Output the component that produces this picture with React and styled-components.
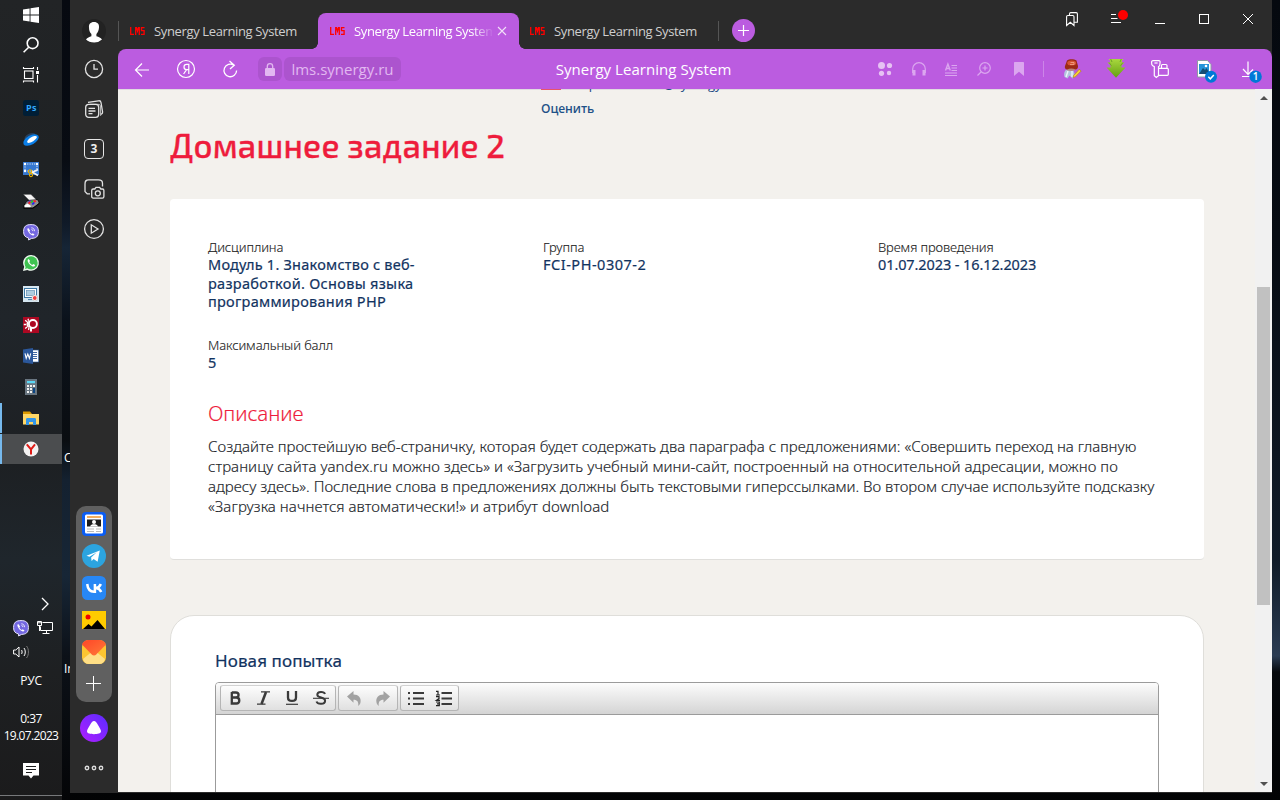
import React from "react";
import styled, { createGlobalStyle } from "styled-components";

const Global = createGlobalStyle`
  * { box-sizing: border-box; }
  html, body { margin: 0; padding: 0; height: 800px; overflow: hidden; background: #05080c; }
  body { font-family: "Noto Sans", "Open Sans", sans-serif; }
  svg { display: block; flex: none; overflow: visible; }
`;

const ui = `"Open Sans", "Noto Sans", sans-serif`;

const Desktop = styled.div`
  display: flex;
  width: 1280px;
  height: 800px;
  overflow: hidden;
  background: linear-gradient(180deg, #05090f 0%, #070c13 30%, #101b28 70%, #2a3b52 82%, #06090d 84%, #020304 100%);
`;

/* ---------- system task bar ---------- */

const Taskbar = styled.div`
  display: flex;
  flex-direction: column;
  align-items: stretch;
  width: 62px;
  height: 800px;
  background: linear-gradient(180deg, #222426 0%, #1f2224 20%, #20252a 40%, #1d2023 58%, #1f262c 70%, #1e2022 84%, #1b1b1c 100%);
`;

const SystemButtons = styled.div`
  display: flex;
  flex-direction: column;
  height: 93px;
`;

const TaskSlot = styled.div`
  display: flex;
  align-items: center;
  justify-content: center;
  height: 30px;
  margin-bottom: ${(p) => (p.$gap ? "1px" : "0")};
  background: ${(p) => (p.$active ? "#4b4d4f" : "transparent")};
  border-left: 2px solid ${(p) => (p.$running ? "#76b9ed" : "transparent")};
  border-right: 2px solid transparent;
  background-clip: border-box;
`;

const Tray = styled.div`
  display: flex;
  flex-wrap: wrap;
  margin-top: auto;
  padding: 0 5px 0 9px;
  height: 72px;
`;

const TrayCell = styled.div`
  display: flex;
  align-items: center;
  justify-content: center;
  width: 24px;
  height: 24px;
`;

const TrayText = styled.div`
  height: ${(p) => p.$h}px;
  margin-top: ${(p) => p.$top || 0}px;
  font: 400 12px/${(p) => p.$h}px ${ui};
  letter-spacing: ${(p) => p.$ls || 0}px;
  text-align: center;
  white-space: nowrap;
  color: #fff;
`;

const NoticeCell = styled.div`
  display: flex;
  justify-content: center;
  align-items: flex-start;
  height: 32px;
  margin-top: 19px;
`;

const TaskbarEnd = styled.div`
  height: 5px;
  border-top: 1px solid #77797b;
`;

const WallpaperStrip = styled.div`
  position: relative;
  width: 8px;
  height: 800px;
  overflow: hidden;
  background: linear-gradient(180deg, #060910 0, #080c13 20%, #101a28 28%, #162536 31%, #0b121b 40%, #0a0d11 55%, #142130 60%, #172636 72%, #0c1118 82%, #040507 100%);
`;

const DesktopLabel = styled.span`
  position: absolute;
  left: ${(p) => p.$x}px;
  top: ${(p) => p.$y}px;
  font: 12px/14px ${ui};
  color: #fff;
`;

/* ---------- browser window ---------- */

const Browser = styled.div`
  display: flex;
  width: 1202px;
  height: 793px;
  padding-bottom: 1px;
  background: #2b2b2b;
`;

const Sidebar = styled.div`
  display: flex;
  flex-direction: column;
  align-items: center;
  width: 48px;
  height: 792px;
  padding-top: 19px;
`;

const SideSlot = styled.div`
  display: flex;
  align-items: center;
  justify-content: center;
  width: 48px;
  height: ${(p) => p.$h}px;
`;

const AppPanel = styled.div`
  display: flex;
  flex-direction: column;
  align-items: center;
  gap: 8px;
  width: 36px;
  height: 196px;
  margin-top: auto;
  padding-top: 6px;
  border-radius: 10px;
  background: #606060;
`;

const NumberBadge = styled.div`
  width: 20px;
  height: 20px;
  border: 1.4px solid #e6e6e6;
  border-radius: 4px;
  font: 700 12px/18px ${ui};
  text-align: center;
  color: #eee;
`;

const Main = styled.div`
  display: flex;
  flex-direction: column;
  width: 1154px;
  height: 792px;
`;

const TabStrip = styled.div`
  display: flex;
  align-items: flex-end;
  height: 49px;
`;

const Tab = styled.div`
  position: relative;
  display: flex;
  align-items: center;
  width: ${(p) => p.$w}px;
  height: 36px;
  padding-left: ${(p) => p.$pad}px;
  border-radius: 8px 8px 0 0;
  background: ${(p) => (p.$active ? "#bb5ce0" : "transparent")};
  color: ${(p) => (p.$active ? "#fff" : "#cfcfcf")};
  ${(p) =>
    p.$active &&
    `&::before, &::after { content: ""; position: absolute; bottom: 0; width: 6px; height: 6px; }
     &::before { left: -6px; background: radial-gradient(circle at 0 0, transparent 5.5px, #bb5ce0 6px); }
     &::after { right: -6px; background: radial-gradient(circle at 100% 0, transparent 5.5px, #bb5ce0 6px); }`}
`;

const TabTitle = styled.span`
  width: ${(p) => (p.$fade ? "138px" : "auto")};
  margin-left: 9px;
  overflow: hidden;
  white-space: nowrap;
  font: 400 13px/20px ${ui};
  letter-spacing: -0.36px;
  ${(p) => p.$fade && "mask-image: linear-gradient(90deg, #000 118px, transparent 140px);"}
`;

const StripDivider = styled.span`
  align-self: flex-end;
  width: 1px;
  height: 20px;
  margin-bottom: 8px;
  background: #555;
`;

const NewTab = styled.div`
  display: flex;
  align-items: center;
  justify-content: center;
  width: 23px;
  height: 23px;
  margin: 0 0 7px 13px;
  border-radius: 50%;
  background: #bb5ce0;
`;

const WindowButtons = styled.div`
  display: flex;
  align-self: flex-start;
  margin: 4px 2px 0 auto;
`;

const Slot = styled.div`
  display: flex;
  align-items: center;
  justify-content: center;
  flex: none;
  width: ${(p) => p.$w || 44}px;
  height: 30px;
`;

const AddressBar = styled.div`
  display: flex;
  align-items: center;
  height: 40px;
  padding-left: 4px;
  border-radius: 8px 8px 0 0;
  background: #bb5ce0;
`;

const Pill = styled.div`
  display: flex;
  align-items: center;
  justify-content: center;
  width: ${(p) => p.$w}px;
  height: 24px;
  margin-left: ${(p) => p.$ml}px;
  border-radius: 6px;
  background: #ac54ce;
  font: 400 15px/24px ${ui};
  color: #e2b8f1;
`;

const PageTitle = styled.div`
  flex: 1;
  padding-left: 18px;
  text-align: center;
  font: 400 15px/24px ${ui};
  letter-spacing: 0.05px;
  color: #fff;
`;

const BarDivider = styled.span`
  width: 1px;
  height: 16px;
  background: #cc85e8;
`;

const Viewport = styled.div`
  display: flex;
  height: 703px;
  overflow: hidden;
  background: #f3f1ed;
  box-shadow: inset 0 1px 0 #e0dbe0;
`;

const Page = styled.div`
  display: flex;
  flex-direction: column;
  width: 1137px;
  height: 703px;
  padding: 0 51px 0 52px;
  overflow: hidden;
`;

const Scrollbar = styled.div`
  display: flex;
  flex-direction: column;
  align-items: center;
  width: 17px;
  padding: 7px 0 6px;
  background: #f1f1f1;
`;

const Thumb = styled.div`
  width: 13px;
  height: 318px;
  margin: 187px 0 auto;
  background: #c1c1c1;
`;

const CutLine = styled.div`
  display: flex;
  flex: none;
  align-items: flex-end;
  height: 3px;
  margin-left: 371px;
  overflow: hidden;
  font: 400 13px/16px ${ui};
  color: #1b4a82;
  white-space: nowrap;
`;

const RedMark = styled.span`
  width: 20px;
  height: 1px;
  margin: 0 5px 2px 0;
  background: #e8546a;
`;

const CutWord = styled.span`
  width: ${(p) => p.$w}px;
`;

const RateLink = styled.a`
  flex: none;
  margin: 8px 0 0 371px;
  font: 600 12px/18px ${ui};
  letter-spacing: -0.05px;
  color: #1f5288;
`;

const Heading = styled.h1`
  flex: none;
  height: 50px;
  margin: 2px 0 29px;
  font: 550 33px/50px "Exo 2", "Noto Sans", sans-serif;
  letter-spacing: 0.27px;
  white-space: nowrap;
  color: #ee1c3c;
  -webkit-text-stroke: 0.4px #ee1c3c;
`;

const InfoCard = styled.section`
  height: 361px;
  flex: none;
  padding: 39px 38px 0;
  border-radius: 4px;
  border-bottom: 1px solid #e0dfdc;
  background: #fff;
`;

const Fields = styled.div`
  display: grid;
  grid-template-columns: repeat(3, 335px);
  grid-template-rows: 98px 61px;
`;

const Field = styled.div`
  padding-right: 90px;
`;

const FieldLabel = styled.div`
  font-size: 13px;
  font-weight: 350;
  line-height: 19px;
  letter-spacing: -0.1px;
  color: #222;
  -webkit-text-stroke: 0.12px #222;
`;

const FieldValue = styled.div`
  font-size: 14.5px;
  font-weight: 400;
  line-height: 18.5px;
  margin-top: -2px;
  white-space: nowrap;
  color: #12335f;
  -webkit-text-stroke: 0.2px #12335f;
`;

const SubHeading = styled.h2`
  margin: 0 0 8px;
  padding-top: 1px;
  font-size: 20.5px;
  font-weight: 300;
  line-height: 30px;
  letter-spacing: -0.1px;
  color: #ee1c3c;
  -webkit-text-stroke: 0.15px #ee1c3c;
`;

const Description = styled.p`
  margin: 0;
  font-size: 15px;
  line-height: 20px;
  font-weight: 350;
  color: #212429;
  white-space: nowrap;
  -webkit-text-stroke: 0.15px #212429;
`;

const TextLine = styled.span`
  display: block;
  letter-spacing: ${(p) => p.$ls || 0}px;
`;

const AttemptCard = styled.section`
  flex: none;
  height: 220px;
  margin-top: 55px;
  padding: 33px 44px 0;
  border: 1px solid #dfdeda;
  border-radius: 24px 24px 0 0;
  background: #fff;
`;

const AttemptTitle = styled.div`
  height: 33px;
  font-size: 17px;
  font-weight: 400;
  line-height: 24px;
  letter-spacing: 0.1px;
  color: #12335f;
  -webkit-text-stroke: 0.2px #12335f;
`;

const Editor = styled.div`
  height: 180px;
  border: 1px solid #9b9b9b;
  border-radius: 4px 4px 0 0;
`;

const EditorBar = styled.div`
  display: flex;
  gap: 2px;
  height: 32px;
  padding: 2px 4px;
  border-bottom: 1px solid #9b9b9b;
  border-radius: 3px 3px 0 0;
  background: linear-gradient(#fcfcfc, #d4d4d4);
`;

const ToolGroup = styled.div`
  display: flex;
  width: ${(p) => p.$w}px;
  height: 26px;
  padding-left: ${(p) => p.$inset || 0}px;
  border: 1px solid #b5b5b5;
  border-top-color: #d2d2d2;
  border-radius: 3px;
  background: linear-gradient(#fdfdfd, #e0e0e0);
`;

const Tool = styled.div`
  display: flex;
  align-items: center;
  justify-content: center;
  width: 28.5px;
  height: 24px;
`;

const S = ({ w = 16, h, children, vb, ...rest }) => (
  <svg width={w} height={h || w} viewBox={vb || `0 0 ${w} ${h || w}`} fill="none" {...rest}>
    {children}
  </svg>
);

/* ---------- task bar icons ---------- */

const Windows = () => (
  <S fill="#fff"><path d="M0 2.4 6.6 1.5v6H0zM7.5 1.3 16 0v7.5H7.5zM0 8.5h6.6v6L0 13.6zM7.5 8.5H16V16l-8.5-1.3z" /></S>
);
const Search = () => (
  <S stroke="#fff" strokeWidth="1.6"><circle cx="9.6" cy="6.2" r="5.4" /><path d="M5.7 10.2.6 15.3" /></S>
);
const TaskView = () => (
  <S stroke="#fff" strokeWidth="1.1"><rect x="1.5" y="4" width="8.500" height="7.500" /><path d="M.5 0v1.500h10V0M.5 15.500v-1.500h10v1.500M14.500 0v3M14.500 8v7.500" /><path d="M13 5.500h3" strokeWidth="3" /></S>
);
const Photoshop = () => (
  <S><rect width="16" height="16" rx="2.5" fill="#001e36" /><text x="3" y="11.4" fontFamily="Open Sans" fontWeight="700" fontSize="9" fill="#31a8ff" textLength="10.4">Ps</text></S>
);
const Disk = () => (
  <S><ellipse cx="7" cy="6" rx="6" ry="3.4" transform="rotate(-28 7 6)" fill="#27405e" /><ellipse cx="8" cy="9" rx="8.6" ry="4.6" transform="rotate(-30 8 9)" fill="#0b7fe8" /><ellipse cx="9" cy="8.4" rx="5.6" ry="2.2" transform="rotate(-32 9 8.4)" fill="#fff" /></S>
);
const Snip = () => (
  <S><rect width="16" height="13" fill="#3678d0" /><rect x="2" y="2" width="12" height="7" stroke="#fff" strokeDasharray="1 1.3" /><g fill="#fff"><circle cx="2" cy="2" r="1.200" /><circle cx="14" cy="2" r="1.200" /><circle cx="2" cy="9" r="1.200" /></g><path d="M15 7.500 8 11M15 13.500 8 9.500" stroke="#f3f3f3" strokeWidth="1.7" /><circle cx="7" cy="9.400" r="1.6" stroke="#e8b000" strokeWidth="1.1" /><circle cx="8" cy="13" r="1.6" stroke="#e8b000" strokeWidth="1.1" /></S>
);
const Scanner = () => (
  <S><path d="M3.500 8.500 6 7l8.500-.5L16 9v2l-6 4.500H1L.5 13z" fill="#8f8f8f" stroke="#000" strokeWidth=".8" /><path d="M.5 1.500H8L13 6.500 6 7z" fill="#f4f4f4" stroke="#555" strokeWidth=".3" /><path d="m4.500 9.500 2-2h2L6 9.500z" fill="#2a2af0" /><path d="m5 9.800 2-1.800 1 1.500-2 2z" fill="#f22" /><path d="m7.500 9 2-1.800 1 1-1.500 2z" fill="#1c3" /><path d="m10 7.800 2-.8 1.500 1.200-2 1.500z" fill="#f22" /><path d="m8.500 11 2-2 1.500 1-2 2z" fill="#22e" /><path d="m1.500 12.500 3-2L8 13l-1 1.500H2z" fill="#fff" /><path d="M.5 15h9.500l6-4.500" stroke="#000" /></S>
);
const Viber = () => (
  <S><path d="M8 .6c5 0 7.4 1.8 7.4 7S13 14.2 8.6 14.4L5.6 16v-2C2 13 .6 11.4.6 7.600.6 2.400 3 .6 8 .6z" fill="#7468e2" stroke="#e6e3fa" strokeWidth="1" /><path d="M5.200 4c-1 .6-1 1.300-.5 2.400.9 2.300 2.400 3.900 4.600 4.900 1 .5 1.600.2 2.200-.8l-1.700-1.300-1 .7C7.500 9.400 6.800 8.600 6.400 7.400l.7-.9z" fill="#fff" /><path d="M8.300 3.800c2 .1 3.200 1.300 3.300 3.400M8.500 5.500c.9.1 1.400.6 1.500 1.600" stroke="#fff" strokeWidth=".8" /></S>
);
const WhatsApp = () => (
  <S><path d="M8.200 0A7.900 7.900 0 1 1 4.400 14.900L0 16l1.200-4.200A7.900 7.900 0 0 1 8.200 0z" fill="#eefaf0" /><circle cx="8.100" cy="7.900" r="6.600" fill="#3fc351" /><path d="M2 14l1-3.200 2.300 2.300z" fill="#3fc351" /><path d="M5.600 4c-1 .5-1.200 1.500-.7 2.800.9 2.200 2.400 3.700 4.700 4.600 1.200.4 2.200 0 2.500-1.400L10.200 9l-.9 1C8 9.500 6.900 8.400 6.300 7.100l.8-1z" fill="#fff" /></S>
);
const Recorder = () => (
  <S><rect width="16" height="16" fill="#d6e7f1" /><rect x="1.500" y="2.500" width="12" height="9" fill="#fff" stroke="#3c78a5" /><rect x="3.500" y="4.500" width="8" height="5.200" fill="#aecde0" stroke="#6590b4" strokeWidth=".7" /><path d="M5 13.600h4" stroke="#3c78a5" /><circle cx="11.800" cy="12" r="3" fill="#fff" stroke="#aaa" strokeWidth=".5" /><circle cx="11.800" cy="12" r="1.900" fill="#ec3f3f" /></S>
);
const GearSearch = () => (
  <S><rect width="16" height="16" fill="#ac0822" /><g stroke="#fff"><circle cx="9.900" cy="7" r="4" strokeWidth="1.900" /><path d="M8 10.500v4" strokeWidth="2" /><path d="M5.600 4.400a3.600 3.600 0 0 0 0 5.800" strokeWidth="1.500" /><path d="m4 4.800-1.800-1.600M3 7.500H.8M4 9.900l-1.800 1.600M5.600 3.800 5 1.800M6 10.500 5.500 13" strokeWidth="1.300" /></g></S>
);
const Word = () => (
  <S><rect x="8" y="2" width="7.700" height="12" fill="#fff" stroke="#2b579a" strokeWidth=".6" /><path d="M9 4.500h5M9 6.500h5M9 8.500h5M9 10.500h5" stroke="#2b579a" strokeWidth=".9" /><path d="M0 1.500 10 0v16L0 14.500z" fill="#2b579a" /><path d="m2 5.300 1.200 5L4.800 6l1.600 4.300 1.300-5" stroke="#fff" strokeWidth="1.100" /></S>
);
const Calculator = () => (
  <S w={12} h={16}><rect width="12" height="16" fill="#697681" /><rect x="2" y="2" width="8" height="2.200" fill="#5bd7f4" /><g fill="#f1f1f1"><path d="M2 6h2v2H2zM5 6h2v2H5zM8 6h2v2H8zM2 9h2v2H2zM5 9h2v2H5zM2 12h2v2H2zM5 12h2v2H5z" /></g><path d="M8 9h2v5H8z" fill="#0b4482" /></S>
);
const Explorer = () => (
  <S><path d="M0 1.500h7L9 4H0z" fill="#dd9a00" /><path d="M0 4h16v10.500H0z" fill="#ffd767" /><path d="M3 15V9.500c0-1 .5-1.500 1.500-1.500h7c1 0 1.500.5 1.500 1.500V15h-3v-3H6v3z" fill="#3496e8" /></S>
);
const Yandex = () => (
  <S><circle cx="8" cy="8" r="7.500" fill="#f4f2f2" /><path d="M3.800 3.300 8 8.300 12 3.300M8 8v5.500" stroke="#de1b17" strokeWidth="2" /></S>
);
const Network = () => (
  <S stroke="#fff"><path d="M5.500 2.500h10v8H3.500v-4M9.500 10.500v3M5.500 13.500h7" /><path d="M.5 1.500h4v4h-4zM2.500 5.500V11" /><path d="M.5 2.800h4" /></S>
);
const Sound = () => (
  <S stroke="#fff" w={17} h={14}><path d="M.6 5h2.200L6 2v10L2.800 9H.6z" /><path d="M8.500 5c.8 1 .8 3 0 4M11 3c1.700 2 1.700 6 0 8" /><path d="M13.500 1c2.600 3 2.600 9 0 12" stroke="#777" /></S>
);
const Notice = () => (
  <S><path d="M0 0h16v12.500h-5.500L8 15.600 5.500 12.500H0z" fill="#fff" /><path d="M3 3.500h10M3 6.500h10M3 9.500h6" stroke="#1d1d1e" /></S>
);

/* ---------- browser icons ---------- */

const line = { stroke: "#e2e2e2", strokeWidth: 1.3 };

const Avatar = () => (
  <S w={24}><circle cx="12" cy="12" r="12" fill="#222" /><path d="M12 3c3.600 0 5.400 2.200 5 5.600-.2 2.900-1.200 5-2.600 6.400v2.300c2.500.5 4.200 1.500 5.600 3.200A11 11 0 0 1 12 23.500c-3.300 0-6-1-8-3 1.400-1.700 3.300-2.700 5.400-3.200V15C7.800 13.500 7 11.500 7 8.600 6.600 5.200 8.400 3 12 3z" fill="#fff" /></S>
);
const Clock = () => <S w={18} {...line}><circle cx="9" cy="9" r="8.600" /><path d="M9 4v5.200h4" /></S>;
const Collections = () => (
  <S w={18} {...line}><rect x=".7" y="4.300" width="13" height="13" rx="3" /><path d="M3.500 8.300h6.500M3.500 11h7M3.500 13.600h4M3 2.400 13.500.8c1.500-.2 2.300.4 2.500 1.700L17.600 12c.1 1-.4 1.900-1.600 2.300" /><path d="M5 4.300h8c1.600 0 2.600.8 2.600 2.600v9" strokeWidth=".8" /></S>
);
const Shot = () => (
  <S w={20} {...line}><path d="M6 14.800H3.200L1 12.600V5c0-3 1-4.200 3.600-4.200h9.800C17.500.8 18.500 2 18.500 4.600v3" /><path d="M7.700 11.500c0-1 .6-1.500 1.500-1.500h1.600l1.200-1.600h3.600L16.800 10h1.600c1 0 1.500.6 1.500 1.500v6c0 1-.6 1.600-1.500 1.600H9.200c-1 0-1.500-.6-1.500-1.600z" /><circle cx="13.800" cy="14.300" r="2.500" /></S>
);
const Play = () => <S w={20} {...line}><circle cx="10" cy="10" r="9.400" /><path d="M7.300 5.800v8.400l6.700-4.200z" /></S>;
const News = () => (
  <S w={24}><rect width="24" height="24" rx="4" fill="#0a5df5" /><rect x="3" y="2.500" width="18" height="19" rx="1.500" fill="#fff" /><path d="M5 5h14" stroke="#f19b38" strokeWidth="1.600" /><path d="M5 7.500h14v7H5z" fill="#1c1c1c" /><circle cx="12" cy="10" r="2" fill="#fff" /><path d="M8 14.500c.5-1.600 2-2.200 4-2.200s3.500.6 4 2.200z" fill="#fff" /><path d="M5 17h7M14 17h5M5 19.500h7M14 19.500h5" stroke="#bbb" /></S>
);
const Telegram = () => <S w={24}><circle cx="12" cy="12" r="12" fill="#2ca4df" /><path d="M4.500 11.800 17.800 6.600l-2.200 11.200-4-2.800-2 2-.5-3.600 5.700-5.100-7.300 4.500z" fill="#fff" /></S>;
const Vk = () => <S w={24}><rect width="24" height="24" rx="5.500" fill="#2787f5" /><path d="M5.200 8c.5 4.500 2.800 7.700 6.800 7.700h.9V8M18.800 8c-.7 2-2.600 3.700-4.800 4.100 2.400.4 4.200 1.600 5.200 4" stroke="#fff" strokeWidth="2.500" /></S>;
const Picture = () => <S w={24} h={18}><rect width="24" height="18" fill="#fc0" /><circle cx="6" cy="6" r="2.500" fill="#f00000" /><path d="m1 18 5.500-5 3 2.500L15.500 9l7.500 9z" fill="#000" /></S>;
const Mail = () => (
  <S w={24}><defs><linearGradient id="ml" x1="0" y1="0" x2="1" y2="1"><stop stopColor="#ff4628" /><stop offset="1" stopColor="#ff7a38" /></linearGradient></defs><rect width="24" height="24" rx="6.500" fill="#fdc531" /><path d="M1 19 12 10l11 9c-.8 3.300-2.500 5-6 5H7c-3.500 0-5.200-1.700-6-5z" fill="#ffdf86" /><path d="M0 4.500C1 1.500 3.500 0 6.500 0h11c3 0 5.500 1.500 6.500 4.500l-9.500 9.800c-1.600 1.600-3.400 1.600-5 0z" fill="url(#ml)" /></S>
);
const SidePlus = () => <S w={16} stroke="#fff" strokeWidth="1"><path d="M7.500 0v15M0 7.500h15" /></S>;
const Alice = () => (
  <S w={28}><defs><linearGradient id="al" x1="1" y1="0" x2="0" y2="1"><stop stopColor="#5a2cff" /><stop offset="1" stopColor="#b01eff" /></linearGradient></defs><circle cx="14" cy="14" r="14" fill="url(#al)" /><path d="M14 7c1.500 0 2.500 1.200 4 4 1.300 2.400 3 4.600 3 6.300 0 2.300-3.500 2.900-7 2.900s-7-.6-7-2.900c0-1.700 1.700-3.900 3-6.300 1.500-2.800 2.500-4 4-4z" fill="#fff" /></S>
);
const Dots = () => <S w={20} h={6} stroke="#ddd" strokeWidth="1.400"><circle cx="3" cy="3" r="1.700" /><circle cx="10" cy="3" r="1.700" /><circle cx="17" cy="3" r="1.700" /></S>;

const Lms = () => (
  <S w={15} h={8} stroke="#f00" strokeWidth="1.300"><path d="M.7 0v7.300H4M5.700 8V.7h.8l1 3.400 1-3.400h.8V8M14.500.7h-3v3h2.600v3.600H11" /></S>
);
const Plus = () => <S w={11} stroke="#fff" strokeWidth="1.200"><path d="M5.500 0v11M0 5.500h11" /></S>;
const TabClose = () => <S w={8} stroke="#f1dff8" strokeWidth="1.100"><path d="m0 0 8 8M8 0 0 8" /></S>;
const BookmarksTop = () => <S w={12} h={14} stroke="#fff" strokeWidth="1.100"><path d="M.6 4.800c0-.9.4-1.300 1.200-1.300h5c.8 0 1.200.4 1.200 1.300v8.700L4.300 10.300.6 13.500zM3.500 3.500V1.900c0-.9.400-1.300 1.200-1.300h5.500c.8 0 1.200.4 1.200 1.300v8.300H8" /></S>;
const Menu = () => <S w={12} h={14} stroke="#fff" strokeWidth="1.100"><path d="M1 2.500h5M1 6.500h6.500M1 10.500h10" /><circle cx="13" cy="3" r="5" fill="#f00" stroke="none" /></S>;
const Minimize = () => <S w={10} stroke="#fff"><path d="M0 9.500h10" /></S>;
const Maximize = () => <S w={10} stroke="#fff"><rect x=".5" y=".5" width="9" height="9" /></S>;
const Close = () => <S w={10} stroke="#fff"><path d="m0 0 10 10M10 0 0 10" /></S>;
const Back = () => <S w={15} h={13} stroke="#fff" strokeWidth="1.200"><path d="M14 7H0M7 .500.500 7 7 13.500" /></S>;
const YaHome = () => (
  <S w={18} stroke="#fff" strokeWidth="1.200"><circle cx="9" cy="9" r="8.500" /><path d="M11.800 14V4.300H9.600C7.800 4.300 7 5.500 7 7s.8 2.600 2.600 2.600h2.200M9.400 9.800 6.600 14" /></S>
);
const Reload = () => <S w={15} h={17} stroke="#fff" strokeWidth="1.300"><path d="M10.800 4.200A6.300 6.300 0 1 0 13.600 9.500M6.500 0l4.800 4.200L7 8" /></S>;
const Lock = () => <S w={10} h={13}><rect y="5" width="10" height="8" rx="1.200" fill="#e2b8f1" /><path d="M2.300 5.500V3.400a2.700 2.700 0 0 1 5.400 0v2.100" stroke="#e2b8f1" strokeWidth="1.300" /></S>;

const pale = "#dba6ef";
const Apps = () => <S w={14} fill="#e6c2f3"><circle cx="3.500" cy="3.500" r="3.500" /><circle cx="11.500" cy="3.500" r="2.600" /><circle cx="3.500" cy="11.300" r="2.600" /><circle cx="11" cy="11" r="2.200" /></S>;
const Headphones = () => <S w={14} stroke={pale} strokeWidth="1.200"><path d="M.7 11V7a6.300 6.300 0 0 1 12.600 0v4" /><path d="M2 8v5.500M12 8v5.500" strokeWidth="3" /></S>;
const Reader = () => <S w={12} h={13} stroke={pale} strokeWidth="1.100"><path d="M6.500 2.500H12M6.500 5H12M6.500 7.500H12M0 10h12M0 12.500h12" /><path d="M.5 7.500 2.900 1 5.300 7.500M1.300 5.500h3.200" strokeWidth="1.400" /></S>;
const ZoomIcon = () => <S w={14} stroke={pale} strokeWidth="1.200"><circle cx="8" cy="6" r="5.300" /><path d="M4.300 9.800.5 13.500M8 3.500v5M5.500 6h5" /></S>;
const Bookmark = () => <S w={10} h={14}><path d="M1 0h8c.7 0 1 .4 1 1v13L5 9.700 0 14V1c0-.6.300-1 1-1z" fill={pale} /></S>;
const Girl = () => (
  <S w={18} h={20}><path d="M3 11c-1.500 1-2.500 4-1.500 7l3 1.500 2-3 3 3 3-2-2-6z" fill="#b3c6df" /><path d="m5 12-2 6M9 12l0 6" stroke="#edf3fa" strokeWidth="1.400" /><path d="M3.500 8.500h10l-1 2.500-4.500 1-4-.8z" fill="#b8857c" /><path d="M4 1.500C6-.3 11-.3 13.500 1.500L15 7c.2 2-.8 3.300-2.500 3.500C10 9.300 6.500 9.300 4 10.500 2 10 1.500 8.500 2 7z" fill="#9c2b16" /><ellipse cx="8.700" cy="4" rx="4.500" ry="2.500" fill="#d65334" /><path d="M7 5.500h4v-2H7.500" stroke="#f3a88e" strokeWidth=".8" /><path d="m10 18.600.7-2.300 5.500-6 2 1.700-5.700 5.800z" fill="#f7cf36" stroke="#a47820" strokeWidth=".6" /></S>
);
const GreenArrow = () => (
  <S w={20} h={20}><defs><linearGradient id="ga" x1="0" y1="0" x2="0" y2="1"><stop stopColor="#a9d83e" /><stop offset="1" stopColor="#649f12" /></linearGradient></defs><path d="M2.500 0H17.500L16 1.500V3.500H18.500L15.500 6.500V8.500H19.500L10 18.700.5 8.500H4.500V6.500L1.500 3.500H4V1.500z" fill="url(#ga)" /><path d="M4.700 0 6 3M15.300 0 14 3M3 3.500l2.500 3.200M17 3.500l-2.500 3.200" stroke="#6b9c28" strokeWidth=".9" /></S>
);
const Keys = () => (
  <S w={18} stroke="#fff" strokeWidth="1.200"><path d="M2.200.6h5.600c1 0 1.500.7 1.300 1.700L8.800 5c-.1.900-.5 1.300-1.300 1.600v9.200L5.300 17.500l-2-1.700V6.600C2.500 6.300 1 5.400.8 4.700L.6 2.300C.5 1.300 1 .6 2.200.6z" /><path d="M3.400 3h3.200" /><path d="M7.500 8.300h8.800c.7 0 1 .4 1 1v5c0 .7-.3 1-1 1H7.500M10.500 8.300V5.600c0-.7.300-1.100 1-1.100h3.400c.7 0 1.100.4 1.100 1.100v2.700" /></S>
);
const Shots = () => (
  <S w={24} h={24}><path d="M4.500 3.500h10l3.500 4V20H4.500z" fill="#fff" stroke="#8d9ba5" /><path d="M6 7h10v10H6z" fill="#2494d9" /><path d="m6 17 4-6 2 2 1.500-2L17 17z" fill="#154e73" /><circle cx="13" cy="9" r="1.300" fill="#fff" /><circle cx="18" cy="19.700" r="6" fill="#0078d7" /><path d="m15.300 19.800 2 2 3.500-3.800" stroke="#fff" strokeWidth="1.500" /></S>
);
const Downloads = () => (
  <S w={24} h={24}><path d="M10 4.500v13M5 12l5 5.500 5-5M4 19.500h10" stroke="#fff" strokeWidth="1.200" /><circle cx="17.600" cy="19.700" r="6.200" fill="#0078d7" /><text x="17.500" y="23.300" textAnchor="middle" fontFamily="Open Sans" fontSize="10" fontWeight="600" fill="#fff">1</text></S>
);
const Arrow = ({ down }) => <S w={8} h={4}><path d={down ? "M0 0h8L4 4z" : "M0 4h8L4 0z"} fill="#505050" /></S>;

/* ---------- editor icons ---------- */

const ink = "#3a3a3a";
const Bold = () => <S w={11} h={14} stroke={ink} strokeWidth="2.300"><path d="M1.800 1.500h4c3.700 0 3.700 5 0 5h-4M1.800 6.500H6.300c4 0 4 6 0 6H1.800zM1.800 1v12" /></S>;
const Italic = () => <S w={13} h={14} stroke={ink}><path d="M4 .8h9M0 13.200h8.500" strokeWidth="1.300" /><path d="M9 1 4.500 13" strokeWidth="2.600" /></S>;
const Underline = () => <S w={12} h={14} stroke={ink}><path d="M2 0v6.500c0 4.600 8 4.600 8 0V0" strokeWidth="2.300" /><path d="M0 13.300h12" strokeWidth="1.200" /></S>;
const Strike = () => <S w={16} h={14} stroke={ink}><path d="M12 3C11 .4 4.300.200 4.300 3.800c0 3.500 7.800 2 7.800 5.900 0 4-7.500 4.100-8.600.8" strokeWidth="2" /><path d="M0 7.300h16" strokeWidth="1.100" /></S>;
const Undo = () => <S w={14} h={15}><path d="M0 5.500 6.500 0v3.500c5 0 8 3.300 7 8-.4 1.700-1.200 2.700-2.300 3.500.5-4-.9-6.200-4.700-6.200v3z" fill="#a2a2a2" /></S>;
const Redo = () => <S w={14} h={15}><path d="M14 5.500 7.500 0v3.500c-5 0-8 3.300-7 8 .4 1.700 1.200 2.700 2.300 3.500-.5-4 .9-6.200 4.700-6.200v3z" fill="#a2a2a2" /></S>;
const Bullets = () => <S w={16} h={14} stroke={ink} strokeWidth="2"><path d="M5 2h11M5 7.500h11M5 13h11M0 2h2M0 7.500h2M0 13h2" /></S>;
const Numbers = () => <S w={16} h={16}><path d="M5.500 3H16M5.500 8.500H16M5.500 14H16" stroke={ink} strokeWidth="2" /><path d="M0 1.300h2V5M0 5h4M0 6.600h3v2L.5 10.300H4M0 12h3.300v3.700H0M1 13.800h2" stroke="#222" strokeWidth="1.200" /></S>;

const TASKS = [Photoshop, Disk, Snip, Scanner, Viber, WhatsApp, Recorder, GearSearch, Word, Calculator, Explorer, Yandex];
const TITLE = "Synergy Learning System";

const InfoField = ({ label, lines }) => (
  <Field>
    <FieldLabel>{label}</FieldLabel>
    <FieldValue>
      {lines.map(([text, spacing]) => (
        <TextLine key={text} $ls={spacing}>{text}</TextLine>
      ))}
    </FieldValue>
  </Field>
);

export default function App() {
  return (
    <Desktop>
      <Global />
      <Taskbar>
        <SystemButtons>
          <TaskSlot><Windows /></TaskSlot>
          <TaskSlot><Search /></TaskSlot>
          <TaskSlot><TaskView /></TaskSlot>
        </SystemButtons>
        {TASKS.map((Icon, i) => (
          <TaskSlot key={i} $gap $running={i > 9} $active={i === 11}><Icon /></TaskSlot>
        ))}
        <Tray>
          <TrayCell />
          <TrayCell><S w={8} h={12} stroke="#fff" strokeWidth="1.300"><path d="m1 0 6 6-6 6" /></S></TrayCell>
          <TrayCell><Viber /></TrayCell>
          <TrayCell><Network /></TrayCell>
          <TrayCell><Sound /></TrayCell>
        </Tray>
        <TrayText $h={18} $top={8} $ls={-0.2}>РУС</TrayText>
        <TrayText $h={17} $top={20} $ls={-0.5}>0:37</TrayText>
        <TrayText $h={17} $ls={-0.65}>19.07.2023</TrayText>
        <NoticeCell><Notice /></NoticeCell>
        <TaskbarEnd />
      </Taskbar>
      <WallpaperStrip>
        <DesktopLabel $x={2} $y={451}>С</DesktopLabel>
        <DesktopLabel $x={2} $y={662}>In</DesktopLabel>
      </WallpaperStrip>
      <Browser>
        <Sidebar>
          <SideSlot $h={24}><Avatar /></SideSlot>
          <SideSlot $h={52}><Clock /></SideSlot>
          <SideSlot $h={28}><Collections /></SideSlot>
          <SideSlot $h={52}><NumberBadge>3</NumberBadge></SideSlot>
          <SideSlot $h={28}><Shot /></SideSlot>
          <SideSlot $h={52}><Play /></SideSlot>
          <AppPanel>
            <News />
            <Telegram />
            <Vk />
            <SideSlot $h={24}><Picture /></SideSlot>
            <Mail />
            <SideSlot $h={24}><SidePlus /></SideSlot>
          </AppPanel>
          <SideSlot $h={52}><Alice /></SideSlot>
          <SideSlot $h={28}><Dots /></SideSlot>
          <SideSlot $h={10} />
        </Sidebar>
        <Main>
          <TabStrip>
            <StripDivider />
            <Tab $w={199} $pad={11}><Lms /><TabTitle>{TITLE}</TabTitle></Tab>
            <Tab $w={201} $pad={12} $active><Lms /><TabTitle $fade>{TITLE}</TabTitle><Slot $w={20}><TabClose /></Slot></Tab>
            <Tab $w={199} $pad={11}><Lms /><TabTitle>{TITLE}</TabTitle></Tab>
            <StripDivider />
            <NewTab><Plus /></NewTab>
            <WindowButtons>
              <Slot><BookmarksTop /></Slot>
              <Slot><Menu /></Slot>
              <Slot><Minimize /></Slot>
              <Slot><Maximize /></Slot>
              <Slot><Close /></Slot>
            </WindowButtons>
          </TabStrip>
          <AddressBar>
            <Slot $w={40}><Back /></Slot>
            <Slot $w={48}><YaHome /></Slot>
            <Slot $w={40}><Reload /></Slot>
            <Pill $w={24} $ml={8}><Lock /></Pill>
            <Pill $w={117} $ml={2}>lms.synergy.ru</Pill>
            <PageTitle>{TITLE}</PageTitle>
            <Slot $w={34}><Apps /></Slot>
            <Slot $w={34}><Headphones /></Slot>
            <Slot $w={30}><Reader /></Slot>
            <Slot $w={36}><ZoomIcon /></Slot>
            <Slot $w={34}><Bookmark /></Slot>
            <Slot $w={14}><BarDivider /></Slot>
            <Slot><Girl /></Slot>
            <Slot><GreenArrow /></Slot>
            <Slot><Keys /></Slot>
            <Slot $w={46}><Shots /></Slot>
            <Slot><Downloads /></Slot>
          </AddressBar>
          <Viewport>
            <Page>
              <CutLine><RedMark /><CutWord $w={97}>Сохранение</CutWord>@synergy</CutLine>
              <RateLink>Оценить</RateLink>
              <Heading>Домашнее задание 2</Heading>
              <InfoCard>
                <Fields>
                  <InfoField label="Дисциплина" lines={[["Модуль 1. Знакомство с веб-", 0.23], ["разработкой. Основы языка", 0.3], ["программирования PHP", 0.26]]} />
                  <InfoField label="Группа" lines={[["FCI-PH-0307-2", 0.52]]} />
                  <InfoField label="Время проведения" lines={[["01.07.2023 - 16.12.2023", -0.1]]} />
                  <InfoField label="Максимальный балл" lines={[["5", 0]]} />
                </Fields>
                <SubHeading>Описание</SubHeading>
                <Description>
                  <TextLine $ls={0.027}>Создайте простейшую веб-страничку, которая будет содержать два параграфа с предложениями: «Совершить переход на главную</TextLine>
                  <TextLine $ls={0.05}>страницу сайта yandex.ru можно здесь» и «Загрузить учебный мини-сайт, построенный на относительной адресации, можно по</TextLine>
                  <TextLine $ls={0.01}>адресу здесь». Последние слова в предложениях должны быть текстовыми гиперссылками. Во втором случае используйте подсказку</TextLine>
                  <TextLine $ls={0.06}>«Загрузка начнется автоматически!» и атрибут download</TextLine>
                </Description>
              </InfoCard>
              <AttemptCard>
                <AttemptTitle>Новая попытка</AttemptTitle>
                <Editor>
                  <EditorBar>
                    <ToolGroup $w={116}>
                      <Tool><Bold /></Tool><Tool><Italic /></Tool><Tool><Underline /></Tool><Tool><Strike /></Tool>
                    </ToolGroup>
                    <ToolGroup $w={60} $inset={1}><Tool><Undo /></Tool><Tool><Redo /></Tool></ToolGroup>
                    <ToolGroup $w={59} $inset={1}><Tool><Bullets /></Tool><Tool><Numbers /></Tool></ToolGroup>
                  </EditorBar>
                </Editor>
              </AttemptCard>
            </Page>
            <Scrollbar>
              <Arrow />
              <Thumb />
              <Arrow down />
            </Scrollbar>
          </Viewport>
        </Main>
      </Browser>
    </Desktop>
  );
}
